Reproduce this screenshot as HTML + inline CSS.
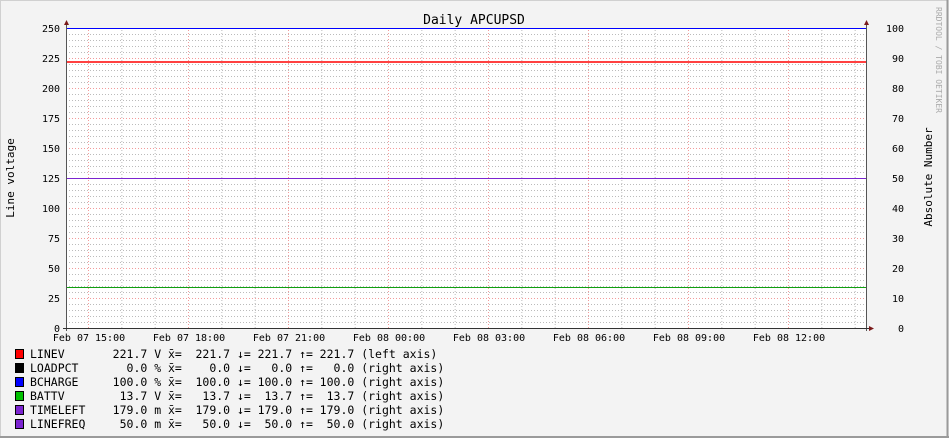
<!DOCTYPE html>
<html><head><meta charset="utf-8"><style>
html,body{margin:0;padding:0;background:#f3f3f3;}
svg{display:block;}
text{font-family:"DejaVu Sans Mono","Liberation Mono",monospace;fill:#000;white-space:pre;}
</style></head><body>
<svg width="949" height="438" viewBox="0 0 949 438" xmlns="http://www.w3.org/2000/svg">
<defs>
<pattern id="hmin" patternUnits="userSpaceOnUse" x="0" y="28" width="800" height="6"><line x1="0" y1="0.5" x2="800" y2="0.5" stroke="#bbb" stroke-dasharray="1,2"/></pattern>
<pattern id="hmaj" patternUnits="userSpaceOnUse" x="0" y="28" width="800" height="30"><line x1="0" y1="0.5" x2="800" y2="0.5" stroke="#f39b9b" stroke-dasharray="1,2"/></pattern>
<pattern id="vmin" patternUnits="userSpaceOnUse" x="88" y="0" width="33.333" height="300"><line x1="0.5" y1="0" x2="0.5" y2="300" stroke="#bbb" stroke-dasharray="1,2"/></pattern>
<pattern id="vmaj" patternUnits="userSpaceOnUse" x="88" y="0" width="100" height="300"><line x1="0.5" y1="0" x2="0.5" y2="300" stroke="#f39b9b" stroke-dasharray="1,2"/></pattern>
</defs>
<rect x="0" y="0" width="949" height="438" fill="#f3f3f3"/>
<rect x="0.5" y="0.5" width="947" height="436" fill="none" stroke="#d0d0d0"/>
<line x1="947.5" y1="0" x2="947.5" y2="438" stroke="#9a9a9a" stroke-width="2"/>
<line x1="0" y1="437" x2="949" y2="437" stroke="#9a9a9a" stroke-width="2"/>
<rect x="67" y="28" width="799" height="300" fill="#fff"/>
<rect x="67" y="28" width="799" height="300" fill="url(#hmin)"/>
<rect x="67" y="28" width="799" height="300" fill="url(#vmin)"/>
<rect x="67" y="28" width="799" height="300" fill="url(#hmaj)"/>
<rect x="67" y="28" width="799" height="300" fill="url(#vmaj)"/>
<line x1="67" y1="28.5" x2="866" y2="28.5" stroke="#0000ff"/>
<line x1="67" y1="62" x2="866" y2="62" stroke="#ff0000" stroke-width="1.5"/>
<line x1="67" y1="178.5" x2="866" y2="178.5" stroke="#7b24d0"/>
<line x1="67" y1="287.5" x2="866" y2="287.5" stroke="#10a010"/>
<line x1="66.5" y1="24" x2="66.5" y2="331" stroke="#555"/>
<line x1="866.5" y1="24" x2="866.5" y2="331" stroke="#555"/>
<line x1="63" y1="328.5" x2="870" y2="328.5" stroke="#333"/>
<polygon points="64,25 69,25 66.5,20" fill="#7a1a1a"/>
<polygon points="864,25 869,25 866.5,20" fill="#7a1a1a"/>
<polygon points="869,326 869,331 874,328.5" fill="#7a1a1a"/>
<g font-size="10" text-anchor="end">
<text x="60" y="32">250</text><text x="60" y="62">225</text><text x="60" y="92">200</text><text x="60" y="122">175</text><text x="60" y="152">150</text><text x="60" y="182">125</text><text x="60" y="212">100</text><text x="60" y="242">75</text><text x="60" y="272">50</text><text x="60" y="302">25</text><text x="60" y="332">0</text>
<text x="904" y="32">100</text><text x="904" y="62">90</text><text x="904" y="92">80</text><text x="904" y="122">70</text><text x="904" y="152">60</text><text x="904" y="182">50</text><text x="904" y="212">40</text><text x="904" y="242">30</text><text x="904" y="272">20</text><text x="904" y="302">10</text><text x="904" y="332">0</text>
</g>
<g font-size="10" text-anchor="middle">
<text x="89" y="341">Feb 07 15:00</text><text x="189" y="341">Feb 07 18:00</text><text x="289" y="341">Feb 07 21:00</text><text x="389" y="341">Feb 08 00:00</text><text x="489" y="341">Feb 08 03:00</text><text x="589" y="341">Feb 08 06:00</text><text x="689" y="341">Feb 08 09:00</text><text x="789" y="341">Feb 08 12:00</text>
</g>
<text x="474" y="24" font-size="13" text-anchor="middle">Daily APCUPSD</text>
<text transform="translate(14,178) rotate(-90)" font-size="11" text-anchor="middle">Line voltage</text>
<text transform="translate(932,177) rotate(-90)" font-size="11" text-anchor="middle">Absolute Number</text>
<text transform="translate(936,60) rotate(90)" font-size="8" style="fill:#aaa" text-anchor="middle">RRDTOOL / TOBI OETIKER</text>
<g stroke="#000" stroke-width="1">
<rect x="15.5" y="349.5" width="8" height="9" fill="#ff0000"/>
<rect x="15.5" y="363.5" width="8" height="9" fill="#000000"/>
<rect x="15.5" y="377.5" width="8" height="9" fill="#0000ff"/>
<rect x="15.5" y="391.5" width="8" height="9" fill="#00c000"/>
<rect x="15.5" y="405.5" width="8" height="9" fill="#7b24d0"/>
<rect x="15.5" y="419.5" width="8" height="9" fill="#7b24d0"/>
</g>
<g font-size="11.5">
<g><text x="30" y="358">LINEV</text><text x="30" y="372">LOADPCT</text><text x="30" y="386">BCHARGE</text><text x="30" y="400">BATTV</text><text x="30" y="414">TIMELEFT</text><text x="30" y="428">LINEFREQ</text></g>
<g text-anchor="end"><text x="147.3" y="358">221.7</text><text x="147.3" y="372">0.0</text><text x="147.3" y="386">100.0</text><text x="147.3" y="400">13.7</text><text x="147.3" y="414">179.0</text><text x="147.3" y="428">50.0</text></g>
<g><text x="154.2" y="358">V</text><text x="154.2" y="372">%</text><text x="154.2" y="386">%</text><text x="154.2" y="400">V</text><text x="154.2" y="414">m</text><text x="154.2" y="428">m</text></g>
<g><text x="168" y="358">x̄=</text><text x="168" y="372">x̄=</text><text x="168" y="386">x̄=</text><text x="168" y="400">x̄=</text><text x="168" y="414">x̄=</text><text x="168" y="428">x̄=</text></g>
<g text-anchor="end"><text x="230.1" y="358">221.7</text><text x="230.1" y="372">0.0</text><text x="230.1" y="386">100.0</text><text x="230.1" y="400">13.7</text><text x="230.1" y="414">179.0</text><text x="230.1" y="428">50.0</text></g>
<g><text x="237" y="358">↓=</text><text x="237" y="372">↓=</text><text x="237" y="386">↓=</text><text x="237" y="400">↓=</text><text x="237" y="414">↓=</text><text x="237" y="428">↓=</text></g>
<g text-anchor="end"><text x="292.2" y="358">221.7</text><text x="292.2" y="372">0.0</text><text x="292.2" y="386">100.0</text><text x="292.2" y="400">13.7</text><text x="292.2" y="414">179.0</text><text x="292.2" y="428">50.0</text></g>
<g><text x="299.1" y="358">↑=</text><text x="299.1" y="372">↑=</text><text x="299.1" y="386">↑=</text><text x="299.1" y="400">↑=</text><text x="299.1" y="414">↑=</text><text x="299.1" y="428">↑=</text></g>
<g text-anchor="end"><text x="354.3" y="358">221.7</text><text x="354.3" y="372">0.0</text><text x="354.3" y="386">100.0</text><text x="354.3" y="400">13.7</text><text x="354.3" y="414">179.0</text><text x="354.3" y="428">50.0</text></g>
<g><text x="361.2" y="358">(left axis)</text><text x="361.2" y="372">(right axis)</text><text x="361.2" y="386">(right axis)</text><text x="361.2" y="400">(right axis)</text><text x="361.2" y="414">(right axis)</text><text x="361.2" y="428">(right axis)</text></g>
</g>
</svg>
</body></html>
